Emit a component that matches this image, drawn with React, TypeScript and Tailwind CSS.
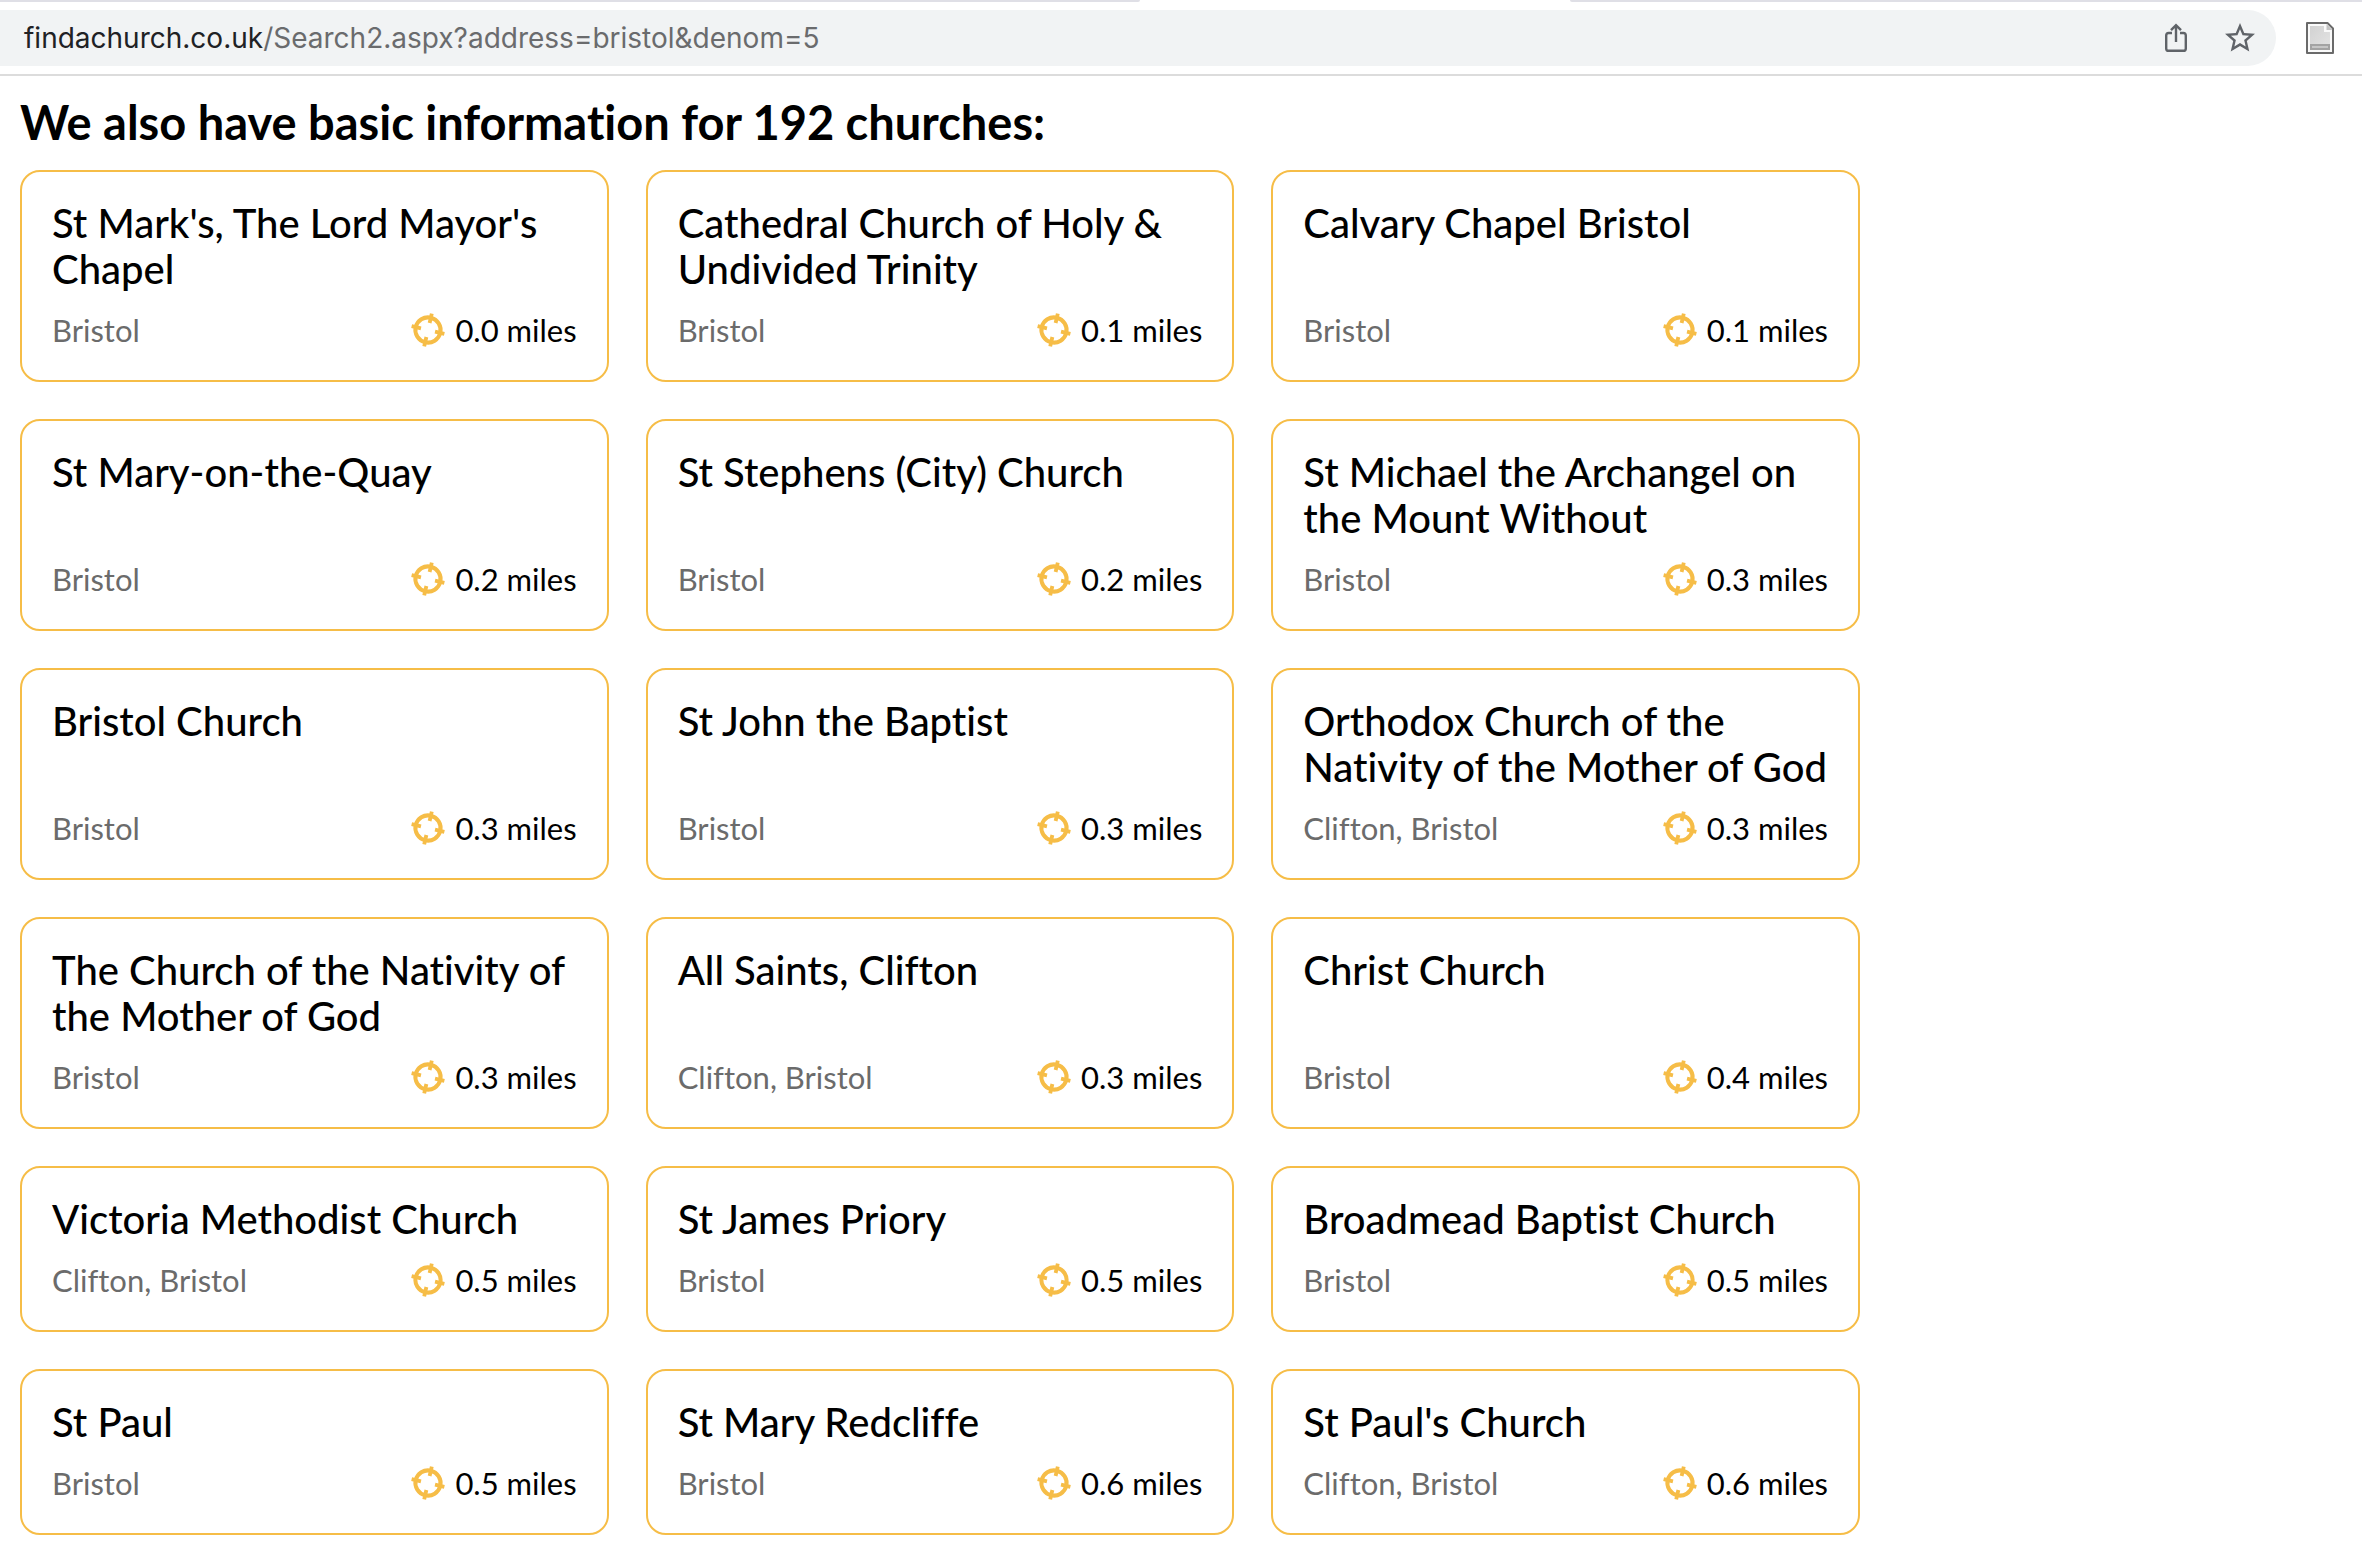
const churches: [string, string, string][] = [
  ["St Mark's, The Lord Mayor's Chapel", "Bristol", "0.0"],
  ["Cathedral Church of Holy & Undivided Trinity", "Bristol", "0.1"],
  ["Calvary Chapel Bristol", "Bristol", "0.1"],
  ["St Mary-on-the-Quay", "Bristol", "0.2"],
  ["St Stephens (City) Church", "Bristol", "0.2"],
  ["St Michael the Archangel on the Mount Without", "Bristol", "0.3"],
  ["Bristol Church", "Bristol", "0.3"],
  ["St John the Baptist", "Bristol", "0.3"],
  ["Orthodox Church of the Nativity of the Mother of God", "Clifton, Bristol", "0.3"],
  ["The Church of the Nativity of the Mother of God", "Bristol", "0.3"],
  ["All Saints, Clifton", "Clifton, Bristol", "0.3"],
  ["Christ Church", "Bristol", "0.4"],
  ["Victoria Methodist Church", "Clifton, Bristol", "0.5"],
  ["St James Priory", "Bristol", "0.5"],
  ["Broadmead Baptist Church", "Bristol", "0.5"],
  ["St Paul", "Bristol", "0.5"],
  ["St Mary Redcliffe", "Bristol", "0.6"],
  ["St Paul's Church", "Clifton, Bristol", "0.6"],
];

function TargetIcon() {
  return (
    <svg className="size-[34px] shrink-0" viewBox="0 0 34 34" fill="none" stroke="#f6bd47" aria-hidden="true">
      <g transform="rotate(13 17 17)">
        <circle cx="17" cy="17" r="12.6" strokeWidth="4" />
        <path d="M17 0.2V9.8M17 24.2V33.8M0.2 17H9.8M24.2 17H33.8" strokeWidth="3.8" />
      </g>
    </svg>
  );
}

function ShareIcon() {
  return (
    <svg className="h-[30px] w-6" viewBox="0 0 24 30" fill="none" stroke="#5f6368" strokeWidth="2.4" aria-hidden="true">
      <path d="M8 10H4.6Q2.2 10 2.2 12.4V25.4Q2.2 27.8 4.6 27.8H19.4Q21.8 27.8 21.8 25.4V12.4Q21.8 10 19.4 10H16" />
      <path d="M12 19V2.4M7 7.2L12 2.2L17 7.2" />
    </svg>
  );
}

function StarIcon() {
  return (
    <svg className="size-9" viewBox="0 0 24 24" fill="#5f6368" aria-hidden="true">
      <path d="M22 9.24l-7.19-.62L12 2 9.19 8.63 2 9.24l5.46 4.73L5.82 21 12 17.27 18.18 21l-1.63-7.03L22 9.24zM12 15.4l-3.76 2.27 1-4.28-3.32-2.88 4.38-.38L12 6.1l1.71 4.04 4.38.38-3.32 2.88 1 4.28L12 15.4z" />
    </svg>
  );
}

function DocumentIcon() {
  return (
    <svg className="h-8 w-7" viewBox="0 0 28 32" aria-hidden="true">
      <defs>
        <linearGradient id="paper" x1="0" y1="0" x2="1" y2="1">
          <stop offset="0" stopColor="#d2d2d2" />
          <stop offset="1" stopColor="#e4e4e4" />
        </linearGradient>
      </defs>
      <path d="M1 1H21.5L27 6.5V31H1Z" fill="#fafafa" stroke="#6a6a6a" strokeWidth="2" strokeLinejoin="round" />
      <path d="M4 4H18V10H24V28H4Z" fill="url(#paper)" />
      <path d="M20.5 2V8H26.5Z" fill="#c4c4c4" />
      <path d="M4 22H24V28H4Z" fill="#a3a3a3" />
      <path d="M6 24H22V26H6Z" fill="#c6c6c6" />
    </svg>
  );
}

function BrowserBar() {
  return (
    <header className="border-b-2 border-[#dcdcdc] bg-white">
      <div className="flex h-0.5">
        <div className="w-[1140px] rounded-br bg-[#dfdfe6]" />
        <div className="w-[430px]" />
        <div className="flex-1 rounded-bl bg-[#dfdfe6]" />
      </div>
      <div className="flex items-center py-2 pr-7">
        <div className="flex h-14 flex-1 items-center rounded-r-full bg-[#f1f3f4] pr-[18px] pl-6">
          <a
            href="#results"
            className="flex-1 font-['Inter','Liberation_Sans',sans-serif] text-[28px] leading-9 text-[#6a6b6d]"
          >
            <span className="text-[#202124]">findachurch.co.uk</span>/Search2.aspx?address=bristol&amp;denom=5
          </a>
          <button type="button" aria-label="Share this page" className="mr-[34px]">
            <ShareIcon />
          </button>
          <button type="button" aria-label="Bookmark this page">
            <StarIcon />
          </button>
        </div>
        <button type="button" aria-label="Reader extension" className="ml-[30px]">
          <DocumentIcon />
        </button>
      </div>
    </header>
  );
}

function ChurchCard({ name, place, miles }: { name: string; place: string; miles: string }) {
  return (
    <li className="flex flex-col justify-between gap-[18px] rounded-[20px] border-2 border-[#f6bd47] px-[30px] pt-7 pb-[30px]">
      <h3 className="text-[40px] leading-[46px] font-medium">{name}</h3>
      <div className="flex items-center justify-between text-[31px] leading-10">
        <span className="text-[#6b6b6b]">{place}</span>
        <span className="flex items-center gap-2.5">
          <TargetIcon />
          {miles} miles
        </span>
      </div>
    </li>
  );
}

export default function App() {
  return (
    <div className="min-h-screen bg-white font-['Lato','Open_Sans',sans-serif] text-black [font-variant-ligatures:none]">
      <BrowserBar />
      <main id="results" className="px-5 pt-[18px] pb-2">
        <h2 className="mb-5 text-[47px] leading-14 font-bold">We also have basic information for 192 churches:</h2>
        <ul className="grid max-w-[1840px] grid-cols-3 gap-[37px]">
          {churches.map(([name, place, miles]) => (
            <ChurchCard key={name} name={name} place={place} miles={miles} />
          ))}
        </ul>
      </main>
    </div>
  );
}
